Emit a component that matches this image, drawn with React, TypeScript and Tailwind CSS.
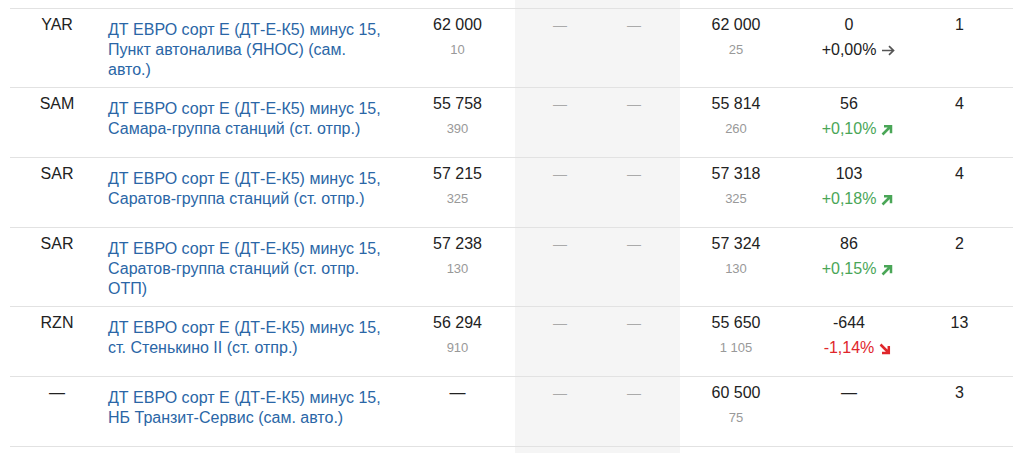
type Trend = "flat" | "up" | "down";

type Row = {
  code: string;
  name: string;
  p1?: string;
  v1?: string;
  p2: string;
  v2: string;
  diff: string;
  pct?: string;
  trend?: Trend;
  n: string;
};

const rows: Row[] = [
  {
    code: "YAR",
    name: "ДТ ЕВРО сорт Е (ДТ-Е-К5) минус 15, Пункт автоналива (ЯНОС) (сам. авто.)",
    p1: "62 000",
    v1: "10",
    p2: "62 000",
    v2: "25",
    diff: "0",
    pct: "+0,00%",
    trend: "flat",
    n: "1",
  },
  {
    code: "SAM",
    name: "ДТ ЕВРО сорт Е (ДТ-Е-К5) минус 15, Самара-группа станций (ст. отпр.)",
    p1: "55 758",
    v1: "390",
    p2: "55 814",
    v2: "260",
    diff: "56",
    pct: "+0,10%",
    trend: "up",
    n: "4",
  },
  {
    code: "SAR",
    name: "ДТ ЕВРО сорт Е (ДТ-Е-К5) минус 15, Саратов-группа станций (ст. отпр.)",
    p1: "57 215",
    v1: "325",
    p2: "57 318",
    v2: "325",
    diff: "103",
    pct: "+0,18%",
    trend: "up",
    n: "4",
  },
  {
    code: "SAR",
    name: "ДТ ЕВРО сорт Е (ДТ-Е-К5) минус 15, Саратов-группа станций (ст. отпр. ОТП)",
    p1: "57 238",
    v1: "130",
    p2: "57 324",
    v2: "130",
    diff: "86",
    pct: "+0,15%",
    trend: "up",
    n: "2",
  },
  {
    code: "RZN",
    name: "ДТ ЕВРО сорт Е (ДТ-Е-К5) минус 15, ст. Стенькино II (ст. отпр.)",
    p1: "56 294",
    v1: "910",
    p2: "55 650",
    v2: "1 105",
    diff: "-644",
    pct: "-1,14%",
    trend: "down",
    n: "13",
  },
  {
    code: "—",
    name: "ДТ ЕВРО сорт Е (ДТ-Е-К5) минус 15, НБ Транзит-Сервис (сам. авто.)",
    p2: "60 500",
    v2: "75",
    diff: "—",
    n: "3",
  },
];

const grid =
  "grid w-[1003px] grid-cols-[94px_296px_115px_90px_58px_17px_112px_114px_107px]";

const TrendIcon = ({ trend }: { trend: Trend }) => {
  if (trend === "flat")
    return (
      <svg width="14" height="11" viewBox="0 0 14 11" fill="none" stroke="currentColor" strokeWidth="1.7">
        <path d="M1 5.5h11.5M8 1.2l4.5 4.3-4.5 4.3" />
      </svg>
    );
  if (trend === "up")
    return (
      <svg width="12" height="12" viewBox="0 0 12 12" fill="none" stroke="currentColor" strokeWidth="2.5">
        <path d="M1.5 10.5L9.5 2.5M3 2.2h7v7" />
      </svg>
    );
  return (
    <svg width="12" height="12" viewBox="0 0 12 12" fill="none" stroke="currentColor" strokeWidth="2.5">
      <path d="M1.5 1.5L9.5 9.5M9.8 3v7H3" />
    </svg>
  );
};

const trendColor: Record<Trend, string> = {
  flat: "text-[#222]",
  up: "text-[#4aa657]",
  down: "text-[#e0262b]",
};

const Gray = () => <div className="bg-[#f5f5f5]" />;

const PriceCell = ({ price, vol }: { price?: string; vol?: string }) => (
  <div className="pt-[6px] pb-[7px] text-center">
    <div className="text-[16px] leading-[20px] text-[#222]">{price ?? "—"}</div>
    {vol && <div className="mt-[5px] text-[13px] leading-[20px] text-[#999]">{vol}</div>}
  </div>
);

const TableRow = ({ r }: { r: Row }) => (
  <div className={`${grid} min-h-[70px] border-b border-[#e2e2e2]`}>
    <div className="pt-[6px] pb-[7px] text-center text-[16px] leading-[20px] text-[#222]">{r.code}</div>
    <div className="pt-[11px] pb-[7px] pl-[4px] pr-[12px] text-[16px] leading-[20px] text-[#2a66a6]">
      {r.name}
    </div>
    <PriceCell price={r.p1} vol={r.v1} />
    <div className="bg-[#f5f5f5] pt-[6px] text-center text-[14px] leading-[20px] text-[#aaa]">—</div>
    <div className="bg-[#f5f5f5] pt-[6px] text-center text-[14px] leading-[20px] text-[#aaa]">—</div>
    <Gray />
    <PriceCell price={r.p2} vol={r.v2} />
    <div className="pt-[6px] pb-[7px] text-center">
      <div className="text-[16px] leading-[20px] text-[#222]">{r.diff}</div>
      {r.pct && r.trend && (
        <div className={`mt-[5px] text-[16px] leading-[20px] ${trendColor[r.trend]}`}>
          <span className="relative">
            {r.pct}
            <span
              className={`absolute left-full top-[4px] ml-[5px] ${r.trend === "flat" ? "text-[#555]" : ""}`}
            >
              <TrendIcon trend={r.trend} />
            </span>
          </span>
        </div>
      )}
    </div>
    <div className="pt-[6px] pb-[7px] text-center text-[16px] leading-[20px] text-[#222]">{r.n}</div>
  </div>
);

export default function App() {
  return (
    <div className="w-[1024px] h-[453px] overflow-hidden bg-white pl-[10px] font-['Liberation_Sans',Arial,sans-serif]">
      <div className={`${grid} h-[9px] border-b border-[#e2e2e2]`}>
        <div />
        <div />
        <div />
        <Gray />
        <Gray />
        <Gray />
      </div>
      {rows.map((r, i) => (
        <TableRow key={i} r={r} />
      ))}
      <div className={`${grid} h-[7px]`}>
        <div />
        <div />
        <div />
        <Gray />
        <Gray />
        <Gray />
      </div>
    </div>
  );
}
